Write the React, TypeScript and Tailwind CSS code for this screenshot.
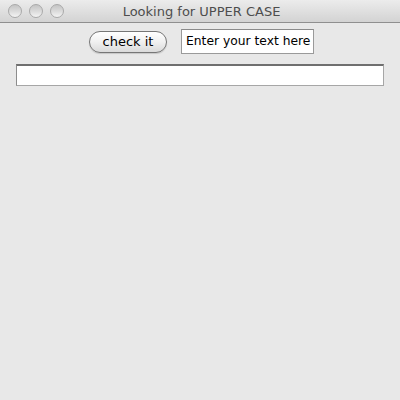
export default function App() {
  const dots = [0, 1, 2];
  return (
    <div className="w-[400px] h-[400px] bg-[#e8e8e8] flex flex-col overflow-hidden" style={{ fontFamily: '"DejaVu Sans", "Liberation Sans", sans-serif' }}>
      {/* title bar */}
      <div className="h-[23px] shrink-0 flex items-center relative bg-gradient-to-b from-[#ececec] to-[#d3d3d3] border-b border-[#8f8f8f]">
        <div className="flex gap-[7px] pl-[8px]">
          {dots.map((d) => (
            <div
              key={d}
              className="w-[14px] h-[14px] rounded-full border border-[#a9a9a9] bg-gradient-to-b from-[#c4c4c4] via-[#dadada] to-[#f4f4f4]"
            />
          ))}
        </div>
        <div className="flex-1 text-center text-[13px] text-[#4d4d4d] pr-[61px] leading-none">Looking for UPPER CASE</div>
      </div>

      {/* controls */}
      <div className="flex items-center gap-[14px] pt-[6px] pl-[89px]">
        <button className="w-[78px] h-[22px] rounded-full border border-[#767676] bg-gradient-to-b from-[#ffffff] via-[#f0f0f0] to-[#dadada] text-[13px] text-black leading-none shadow-[0_1px_1px_rgba(0,0,0,0.15)]">
          check it
        </button>
        <div className="w-[133px] h-[25px] border border-[#9a9a9a] border-t-[#8a8a8a] bg-white flex items-center pl-[4px] text-[12.3px] text-black whitespace-nowrap overflow-hidden">
          Enter your text here
        </div>
      </div>

      <div className="px-[16px] pt-[10px]">
        <div className="h-[22px] bg-white border border-[#a6a6a6] border-t-2 border-t-[#6f6f6f] border-l-[#8c8c8c]" />
      </div>
    </div>
  );
}
